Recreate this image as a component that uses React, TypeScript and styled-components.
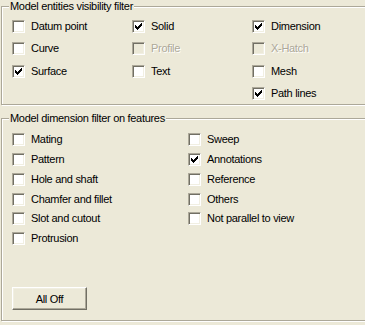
import React, { FC } from "react";
import styled, { createGlobalStyle } from "styled-components";

const GlobalStyle = createGlobalStyle`
  html, body {
    margin: 0;
    padding: 0;
    background: #ece9d8;
    overflow: hidden;
  }
  body {
    font-family: "Liberation Sans", Arial, sans-serif;
    font-size: 11px;
    color: #000;
  }
`;

interface OptionProps {
  label: string;
  checked?: boolean;
  disabled?: boolean;
}

const Option: FC<OptionProps> = props => {
  return (
    <OptionRow>
      <Box disabled={props.disabled}>
        {props.checked && (
          <svg width="9" height="9" viewBox="0 0 9 9" shapeRendering="crispEdges">
            <path
              d="M1 3h1v3H1z M2 4h1v3H2z M3 5h1v3H3z M4 4h1v3H4z M5 3h1v3H5z M6 2h1v3H6z M7 1h1v3H7z"
              fill={props.disabled ? "#aca899" : "#000"}
            />
          </svg>
        )}
      </Box>
      <Caption disabled={props.disabled}>{props.label}</Caption>
    </OptionRow>
  );
};

export default function App() {
  return (
    <Page>
      <GlobalStyle />
      <Group>
        <Title>Model entities visibility filter</Title>
        <EntityGrid>
          <Option label="Datum point" />
          <Option label="Solid" checked />
          <Option label="Dimension" checked />
          <Option label="Curve" />
          <Option label="Profile" disabled />
          <Option label="X-Hatch" disabled />
          <Option label="Surface" checked />
          <Option label="Text" />
          <Option label="Mesh" />
          <span />
          <span />
          <Option label="Path lines" checked />
        </EntityGrid>
      </Group>

      <Group second>
        <Title>Model dimension filter on features</Title>
        <FeatureGrid>
          <Option label="Mating" />
          <Option label="Pattern" />
          <Option label="Hole and shaft" />
          <Option label="Chamfer and fillet" />
          <Option label="Slot and cutout" />
          <Option label="Protrusion" />
          <Option label="Sweep" />
          <Option label="Annotations" checked />
          <Option label="Reference" />
          <Option label="Others" />
          <Option label="Not parallel to view" />
        </FeatureGrid>
        <Footer>
          <Button>All Off</Button>
        </Footer>
      </Group>
    </Page>
  );
}

const Page = styled.div`
  width: 365px;
  height: 325px;
  overflow: hidden;
`;

const Group = styled.fieldset<{ second?: boolean }>`
  box-sizing: border-box;
  width: 380px;
  margin: ${props => (props.second ? "7px" : "0")} 0 0 1px;
  padding: 0;
  min-inline-size: 0;
  border: 1px solid #aca899;
  box-shadow: inset 1px 1px 0 #fff, 1px 1px 0 #fff;
`;

const Title = styled.legend`
  margin-left: 7px;
  padding: 0 1px;
  height: 13px;
  line-height: 13px;
  letter-spacing: -0.3px;
  background: #ece9d8;
  white-space: nowrap;
`;

const EntityGrid = styled.div`
  display: grid;
  grid-template-columns: 120px 120px 120px;
  grid-template-rows: 22px 23px 22px 13px;
  padding: 7px 0 4px 10px;
`;

const FeatureGrid = styled.div`
  display: grid;
  grid-auto-flow: column;
  grid-template-columns: 176px 176px;
  grid-template-rows: 20px 20px 20px 19px 20px 13px;
  padding: 8px 0 0 10px;
`;

const OptionRow = styled.label`
  display: flex;
  align-items: center;
  height: 13px;
  white-space: nowrap;
`;

const Box = styled.span<{ disabled?: boolean }>`
  box-sizing: border-box;
  display: flex;
  flex: none;
  width: 13px;
  height: 13px;
  padding: 1px;
  border: 1px solid;
  border-color: #aca899 #fff #fff #aca899;
  box-shadow: inset 1px 1px 0 #716f64, inset -1px -1px 0 #f1efe2;
  background: ${props => (props.disabled ? "#ece9d8" : "#fff")};
`;

const Caption = styled.span<{ disabled?: boolean }>`
  margin-left: 6px;
  line-height: 13px;
  letter-spacing: -0.3px;
  color: ${props => (props.disabled ? "#aca899" : "#000")};
  text-shadow: ${props => (props.disabled ? "1px 1px 0 #fff" : "none")};
`;

const Footer = styled.div`
  padding: 42px 0 10px 10px;
`;

const Button = styled.button`
  box-sizing: border-box;
  display: block;
  width: 75px;
  height: 23px;
  padding: 0;
  font-family: "Liberation Sans", Arial, sans-serif;
  font-size: 11px;
  letter-spacing: -0.3px;
  color: #000;
  background: #ece9d8;
  border: 1px solid;
  border-color: #fff #716f64 #716f64 #fff;
  box-shadow: inset -1px -1px 0 #aca899, inset 1px 1px 0 #f1efe2;
  border-radius: 0;
`;
